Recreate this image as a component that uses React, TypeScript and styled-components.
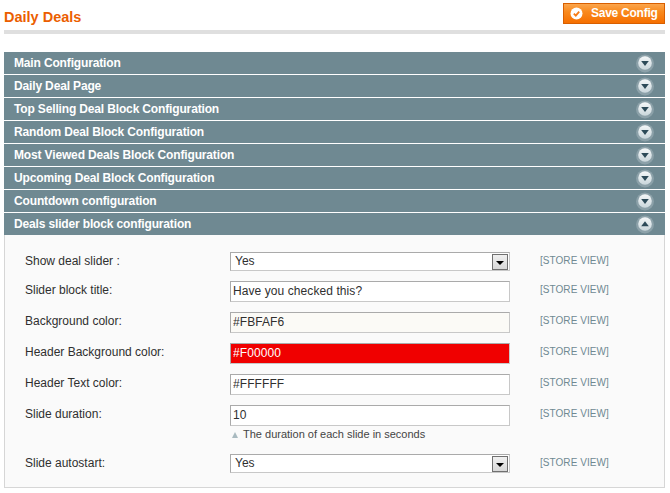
import styled, { createGlobalStyle } from 'styled-components';

const SECTIONS = [
  'Main Configuration',
  'Daily Deal Page',
  'Top Selling Deal Block Configuration',
  'Random Deal Block Configuration',
  'Most Viewed Deals Block Configuration',
  'Upcoming Deal Block Configuration',
  'Countdown configuration',
];

const GlobalStyle = createGlobalStyle`
  html, body { margin: 0; padding: 0; background: #fff; }
  body { font: 12px/15px "Liberation Sans", Arial, sans-serif; color: #2f2f2f; }
`;

const Page = styled.div`
  width: 670px;
  height: 493px;
  padding: 3px 5px 0 4px;
  box-sizing: border-box;
  overflow: hidden;
`;

const Header = styled.div`
  display: flex;
  justify-content: space-between;
  align-items: flex-start;
  height: 27px;
  border-bottom: 4px solid #dfdfdf;
  box-sizing: content-box;
  margin-bottom: 18px;
`;

const Title = styled.h3`
  margin: 5px 0 0;
  font-size: 14.5px;
  line-height: 18px;
  font-weight: bold;
  color: #eb5e00;
`;

const SaveButton = styled.button`
  display: flex;
  align-items: center;
  gap: 8px;
  width: 102px;
  height: 21px;
  margin: 0;
  padding: 0 0 0 6px;
  box-sizing: border-box;
  border: 1px solid #d85f00;
  background: linear-gradient(#fba54c, #f98a1e 40%, #f66f00);
  color: #fff;
  font: bold 12px/15px "Liberation Sans", Arial, sans-serif;
  letter-spacing: -0.25px;
`;

const Accordion = styled.div`
  display: flex;
  flex-direction: column;
  gap: 1px;
`;

const SectionBar = styled.div`
  display: flex;
  align-items: center;
  justify-content: space-between;
  height: 22px;
  padding: 0 10px 0 10px;
  background: #6f8992;
  color: #fff;
  font-size: 12px;
  font-weight: bold;
  letter-spacing: -0.15px;
`;

const Panel = styled.div`
  height: 253px;
  box-sizing: border-box;
  margin-top: -1px;
  padding: 17px 0 0 20px;
  background: #fafafa;
  border: 1px solid #d6d6d6;
  border-top: 0;
`;

const FieldRow = styled.div<{ $gap: number }>`
  display: grid;
  grid-template-columns: 205px 280px 1fr;
  margin-bottom: ${({ $gap }) => $gap}px;
`;

const Label = styled.label`
  padding-top: 2px;
  color: #2f2f2f;
`;

const Scope = styled.div`
  padding: 2px 0 0 30px;
  font-size: 10px;
  line-height: 14px;
  letter-spacing: 0.05px;
  color: #6f8992;
`;

const TextField = styled.input<{ $bg?: string; $fg?: string }>`
  display: block;
  width: 280px;
  height: 21px;
  margin: 0;
  padding: 1px 2px 3px;
  box-sizing: border-box;
  border: 1px solid #aaa;
  border-right-color: #c8c8c8;
  border-bottom-color: #c8c8c8;
  background: ${({ $bg }) => $bg ?? '#fff'};
  color: ${({ $fg }) => $fg ?? '#2f2f2f'};
  font: 12px/15px "Liberation Sans", Arial, sans-serif;
  letter-spacing: 0.08px;
  outline: none;
`;

const SelectBox = styled.div`
  display: flex;
  align-items: center;
  justify-content: space-between;
  width: 280px;
  height: 19px;
  padding: 0 1px 0 4px;
  box-sizing: border-box;
  border: 1px solid #aaa;
  border-right-color: #c8c8c8;
  border-bottom-color: #c8c8c8;
  background: #fff;
  color: #2f2f2f;
`;

const SelectArrow = styled.span`
  display: flex;
  align-items: center;
  justify-content: center;
  width: 16px;
  height: 16px;
  box-sizing: border-box;
  border: 1px solid #707070;
  background: linear-gradient(#f0f0f0, #d8d8d8);

  &::after {
    content: '';
    margin-top: 3px;
    border-top: 4px solid #000;
    border-left: 4px solid transparent;
    border-right: 4px solid transparent;
  }
`;

const Note = styled.p`
  display: flex;
  align-items: center;
  gap: 5px;
  margin: 0;
  padding-top: 2px;
  font-size: 11px;
  line-height: 13px;
  color: #444;

  &::before {
    content: '';
    margin-left: 2px;
    border-bottom: 6px solid #a9bac0;
    border-left: 3px solid transparent;
    border-right: 3px solid transparent;
  }
`;

function ToggleIcon({ open }: { open?: boolean }) {
  return (
    <svg width="20" height="20" viewBox="0 0 20 20">
      <defs>
        <linearGradient id="toggle-face" x1="0" y1="0" x2="0" y2="1">
          <stop offset="0" stopColor="#f4f7f8" />
          <stop offset="1" stopColor="#c9d6db" />
        </linearGradient>
      </defs>
      <circle cx="10" cy="10.5" r="9" fill="#8ca1a9" />
      <circle cx="10" cy="10" r="6.8" fill="url(#toggle-face)" />
      <path d={open ? 'M6.2 12.2h7.6L10 7.2z' : 'M6.2 8h7.6L10 13z'} fill="#2c4a58" />
    </svg>
  );
}

function CheckIcon() {
  return (
    <svg width="13" height="13" viewBox="0 0 13 13">
      <circle cx="6.5" cy="6.5" r="6" fill="#fff" />
      <path d="M3.8 6.6l2 2 3.4-4" fill="none" stroke="#f77c16" strokeWidth="1.8" />
    </svg>
  );
}

function Select({ value }: { value: string }) {
  return (
    <SelectBox>
      {value}
      <SelectArrow />
    </SelectBox>
  );
}

function Field({ label, gap, children }: { label: string; gap: number; children: React.ReactNode }) {
  return (
    <FieldRow $gap={gap}>
      <Label>{label}</Label>
      <div>{children}</div>
      <Scope>[STORE VIEW]</Scope>
    </FieldRow>
  );
}

export default function App() {
  return (
    <Page>
      <GlobalStyle />
      <Header>
        <Title>Daily Deals</Title>
        <SaveButton>
          <CheckIcon />
          Save Config
        </SaveButton>
      </Header>
      <Accordion>
        {SECTIONS.map((name) => (
          <SectionBar key={name}>
            {name}
            <ToggleIcon />
          </SectionBar>
        ))}
        <SectionBar>
          Deals slider block configuration
          <ToggleIcon open />
        </SectionBar>
        <Panel>
          <Field label="Show deal slider :" gap={10}>
            <Select value="Yes" />
          </Field>
          <Field label="Slider block title:" gap={10}>
            <TextField readOnly value="Have you checked this?" />
          </Field>
          <Field label="Background color:" gap={10}>
            <TextField readOnly value="#FBFAF6" $bg="#fbfaf6" />
          </Field>
          <Field label="Header Background color:" gap={10}>
            <TextField readOnly value="#F00000" $bg="#f00000" $fg="#fff" />
          </Field>
          <Field label="Header Text color:" gap={10}>
            <TextField readOnly value="#FFFFFF" />
          </Field>
          <Field label="Slide duration:" gap={13}>
            <TextField readOnly value="10" />
            <Note>The duration of each slide in seconds</Note>
          </Field>
          <Field label="Slide autostart:" gap={0}>
            <Select value="Yes" />
          </Field>
        </Panel>
      </Accordion>
    </Page>
  );
}
